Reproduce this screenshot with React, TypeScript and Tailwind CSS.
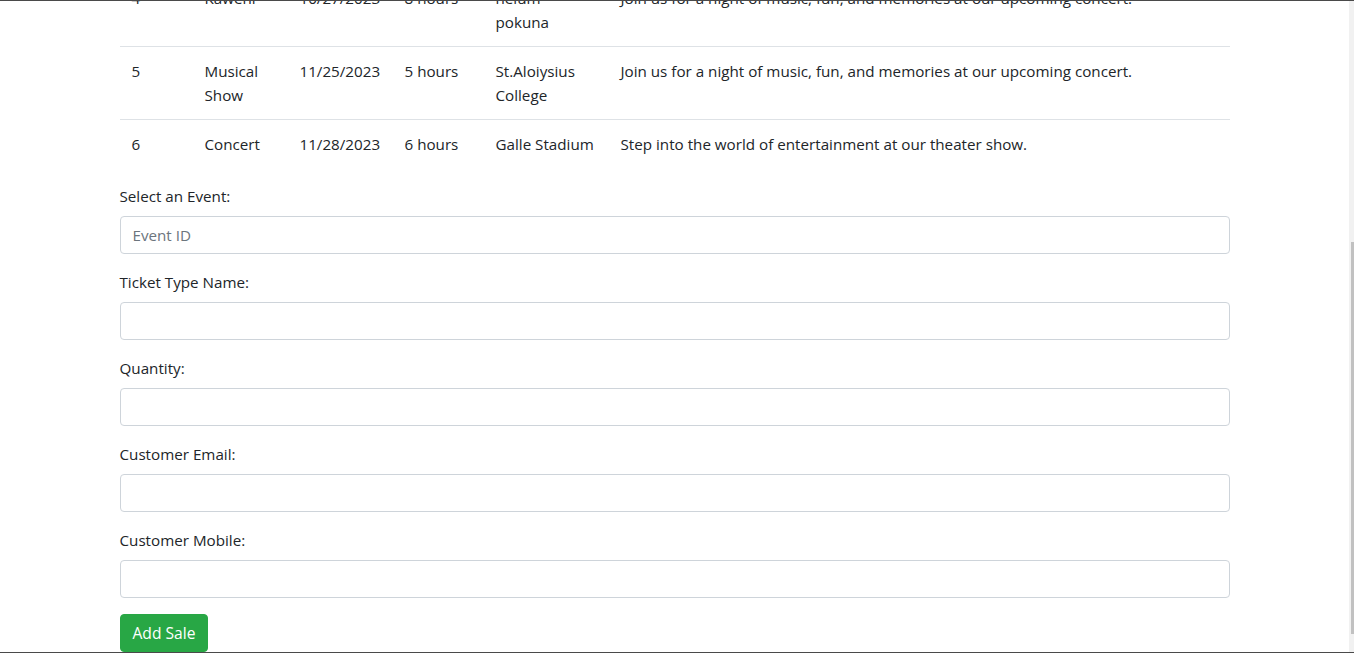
const rows = [
  {
    id: "4",
    name: "Kaweni",
    date: "10/27/2023",
    duration: "8 hours",
    venue: "nelum pokuna",
    description: "Join us for a night of music, fun, and memories at our upcoming concert.",
  },
  {
    id: "5",
    name: "Musical Show",
    date: "11/25/2023",
    duration: "5 hours",
    venue: "St.Aloiysius College",
    description: "Join us for a night of music, fun, and memories at our upcoming concert.",
  },
  {
    id: "6",
    name: "Concert",
    date: "11/28/2023",
    duration: "6 hours",
    venue: "Galle Stadium",
    description: "Step into the world of entertainment at our theater show.",
  },
];

const fields = [
  { label: "Select an Event:", placeholder: "Event ID" },
  { label: "Ticket Type Name:", placeholder: "" },
  { label: "Quantity:", placeholder: "" },
  { label: "Customer Email:", placeholder: "" },
  { label: "Customer Mobile:", placeholder: "" },
];

export default function App() {
  return (
    <div
      className="relative h-[653px] w-[1354px] overflow-hidden border-y border-[#4a4a4a] bg-white text-[15.2px] leading-6 text-[#212529]"
      style={{ fontFamily: '"Segoe UI", "Open Sans", sans-serif' }}
    >
      <div className="w-[1349px] -mt-[28px]">
        <div className="mx-auto w-[1140px] px-[15px]">
          <table className="mb-4 w-full table-fixed border-collapse">
            <colgroup>
              <col className="w-[73px]" />
              <col className="w-[95px]" />
              <col className="w-[105px]" />
              <col className="w-[91px]" />
              <col className="w-[125px]" />
              <col />
            </colgroup>
            <tbody>
              {rows.map((r) => (
                <tr key={r.id} className="border-t border-[#dee2e6] align-top">
                  <td className="p-3">{r.id}</td>
                  <td className="p-3">{r.name}</td>
                  <td className="p-3">{r.date}</td>
                  <td className="p-3">{r.duration}</td>
                  <td className="p-3">{r.venue}</td>
                  <td className="p-3">{r.description}</td>
                </tr>
              ))}
            </tbody>
          </table>

          <form className="flex flex-col">
            {fields.map((f) => (
              <div key={f.label} className="mb-4 flex flex-col">
                <label className="mb-2">{f.label}</label>
                <input
                  type="text"
                  placeholder={f.placeholder}
                  className="h-[38px] w-full rounded border border-[#ced4da] px-3 text-[15.2px] text-[#495057] placeholder:text-[#6c757d] outline-none"
                />
              </div>
            ))}
            <div>
              <button
                type="button"
                className="h-[38px] rounded border border-[#28a745] bg-[#28a745] px-3 text-[15.6px] text-white"
              >
                Add Sale
              </button>
            </div>
          </form>
        </div>
      </div>

      {/* scrollbar */}
      <div className="absolute right-0 top-0 flex h-full w-[5px] flex-col bg-[#f1f1f1]">
        <div className="ml-[2px] mt-[241px] h-[392px] w-[3px] bg-[#c1c1c1]" />
      </div>
    </div>
  );
}
